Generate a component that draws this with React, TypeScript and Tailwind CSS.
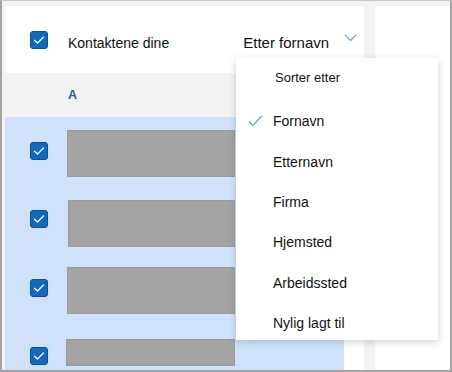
import React from "react";

function Box() {
  return (
    <div className="w-[18px] h-[18px] shrink-0 rounded-[3px] bg-[#1168c2] border border-[#0d4f93] flex items-center justify-center">
      <svg width="12" height="10" viewBox="0 0 12 10" fill="none">
        <path d="M1.5 5.2 L4.5 8 L10.5 2" stroke="#ffffff" strokeWidth="1.3" strokeLinecap="round" strokeLinejoin="round" />
      </svg>
    </div>
  );
}

type Row = { h: number; cb: number; rh: number; rx: number; rw: number };

const rows: Row[] = [
  { h: 70, cb: 25, rh: 47, rx: 19, rw: 168 },
  { h: 67, cb: 23, rh: 47, rx: 20, rw: 167 },
  { h: 72, cb: 25, rh: 47, rx: 19, rw: 168 },
  { h: 44, cb: 21, rh: 27, rx: 18, rw: 169 },
];

const items = ["Fornavn", "Etternavn", "Firma", "Hjemsted", "Arbeidssted", "Nylig lagt til"];

export default function App() {
  return (
    <div
      className="relative w-[452px] h-[372px] overflow-hidden bg-[#f3f3f3] border-2 border-t border-[#a3a3a3] border-t-[#c8c8c8] flex pl-[3px] pt-[5px]"
      style={{ fontFamily: '"Liberation Sans", Arial, sans-serif' }}
    >
      {/* list column */}
      <div className="w-[359px] shrink-0 flex flex-col">
        <div className="h-[67px] shrink-0 bg-white rounded-t-[4px] flex items-center">
          <div className="ml-[25px]">
            <Box />
          </div>
          <span className="ml-[20px] pt-[6px] text-[14px] text-[#111111] leading-none">Kontaktene dine</span>
          <span className="ml-[74px] pt-[6px] text-[15px] text-[#111111] leading-none">Etter fornavn</span>
          <svg className="ml-[15px] mt-[-4px]" width="13" height="8" viewBox="0 0 13 8" fill="none">
            <path d="M0.8 0.8 L6.5 6.5 L12.2 0.8" stroke="#5f9ad6" strokeWidth="1.2" />
          </svg>
        </div>
        <div className="h-[44px] shrink-0 flex items-center">
          <span className="ml-[63px] text-[12.5px] font-bold text-[#2c5c97] leading-none">A</span>
        </div>
        <div className="flex-1 bg-white flex">
          <div className="w-[339px] bg-[#cfe2f9] flex flex-col">
            {rows.map((r, i) => (
              <div key={i} className="flex items-start shrink-0" style={{ height: r.h }}>
                <div className="ml-[25px]" style={{ marginTop: r.cb }}>
                  <Box />
                </div>
                <div
                  className="bg-[#a4a4a4] border border-[#9c9c9c]"
                  style={{ marginTop: 13, marginLeft: r.rx, width: r.rw, height: r.rh }}
                />
              </div>
            ))}
          </div>
        </div>
      </div>
      <div className="w-[11px] shrink-0" />
      {/* right panel */}
      <div className="flex-1 bg-white rounded-tl-[4px]" />

      {/* dropdown */}
      <div className="absolute left-[234px] top-[57px] w-[202px] h-[282px] bg-white shadow-[0_2px_8px_rgba(0,0,0,0.18)] flex flex-col">
        <div className="h-[40px] shrink-0 flex items-center pl-[39px] text-[13px] text-[#111111]">Sorter etter</div>
        <div className="mt-[3px] flex flex-col">
          {items.map((t, i) => (
            <div key={t} className="h-[40.4px] shrink-0 flex items-center relative">
              {i === 0 && (
                <svg className="absolute left-[12px] top-[14px]" width="15" height="12" viewBox="0 0 15 12" fill="none">
                  <path d="M0.8 6.5 L4.8 10.5 L14 1" stroke="#5f9ad6" strokeWidth="1.2" />
                </svg>
              )}
              <span className="pl-[37px] text-[14px] text-[#111111] leading-none">{t}</span>
            </div>
          ))}
        </div>
      </div>
    </div>
  );
}
